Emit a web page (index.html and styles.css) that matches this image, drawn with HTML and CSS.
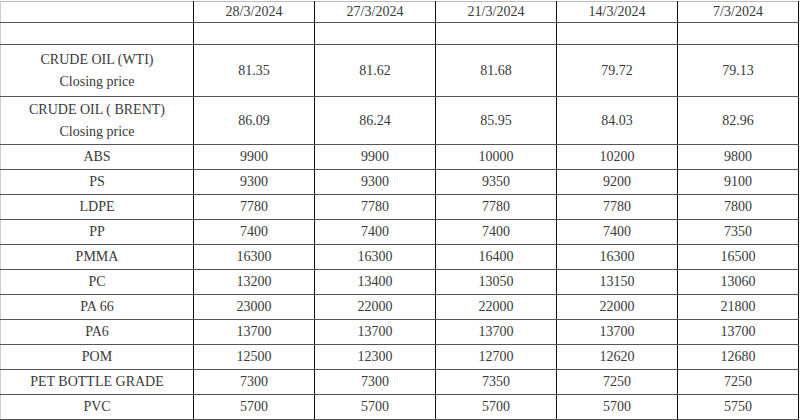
FILE: index.html
```
<!DOCTYPE html>
<html>
<head>
<meta charset="utf-8">
<link rel="stylesheet" href="styles.css">
</head>
<body>
<table class="prices">
  <colgroup>
    <col class="c-name"><col class="c-val"><col class="c-val"><col class="c-val"><col class="c-val"><col class="c-val">
  </colgroup>
  <tr class="r-head"><td></td><td>28/3/2024</td><td>27/3/2024</td><td>21/3/2024</td><td>14/3/2024</td><td>7/3/2024</td></tr>
  <tr class="r-empty"><td></td><td></td><td></td><td></td><td></td><td></td></tr>
  <tr class="r-wti"><td class="two">CRUDE OIL (WTI)<br>Closing price</td><td>81.35</td><td>81.62</td><td>81.68</td><td>79.72</td><td>79.13</td></tr>
  <tr class="r-brent"><td class="two">CRUDE OIL ( BRENT)<br>Closing price</td><td>86.09</td><td>86.24</td><td>85.95</td><td>84.03</td><td>82.96</td></tr>
  <tr><td>ABS</td><td>9900</td><td>9900</td><td>10000</td><td>10200</td><td>9800</td></tr>
  <tr><td>PS</td><td>9300</td><td>9300</td><td>9350</td><td>9200</td><td>9100</td></tr>
  <tr><td>LDPE</td><td>7780</td><td>7780</td><td>7780</td><td>7780</td><td>7800</td></tr>
  <tr><td>PP</td><td>7400</td><td>7400</td><td>7400</td><td>7400</td><td>7350</td></tr>
  <tr><td>PMMA</td><td>16300</td><td>16300</td><td>16400</td><td>16300</td><td>16500</td></tr>
  <tr><td>PC</td><td>13200</td><td>13400</td><td>13050</td><td>13150</td><td>13060</td></tr>
  <tr><td>PA 66</td><td>23000</td><td>22000</td><td>22000</td><td>22000</td><td>21800</td></tr>
  <tr><td>PA6</td><td>13700</td><td>13700</td><td>13700</td><td>13700</td><td>13700</td></tr>
  <tr><td>POM</td><td>12500</td><td>12300</td><td>12700</td><td>12620</td><td>12680</td></tr>
  <tr><td>PET BOTTLE GRADE</td><td>7300</td><td>7300</td><td>7350</td><td>7250</td><td>7250</td></tr>
  <tr><td>PVC</td><td>5700</td><td>5700</td><td>5700</td><td>5700</td><td>5750</td></tr>
</table>
</body>
</html>
```
FILE: styles.css
```
html, body {
  margin: 0;
  padding: 0;
  background: #fff;
}
body {
  padding-top: 1px;
}
.prices {
  border-collapse: collapse;
  table-layout: fixed;
  width: 799px;
  font-family: "Liberation Serif", "Times New Roman", serif;
  font-size: 14px;
  color: #3a3a3a;
}
.c-name { width: 193px; }
.c-val { width: 121px; }
.prices td {
  border-top: 1px solid #555;
  border-bottom: 1px solid #555;
  border-left: 1px solid #111;
  border-right: 1px solid #111;
  text-align: center;
  vertical-align: middle;
  padding: 0;
  height: 24px;
  line-height: 16px;
}
.prices tr:first-child td {
  border-top-color: #bbb;
}
.prices td:first-child {
  border-left-color: #ccc;
}
.prices .r-head td { height: 20px; }
.prices .r-empty td { height: 21px; }
.prices .r-wti td { height: 51px; }
.prices .r-brent td { height: 47px; }
.prices td.two { line-height: 22px; }
```
